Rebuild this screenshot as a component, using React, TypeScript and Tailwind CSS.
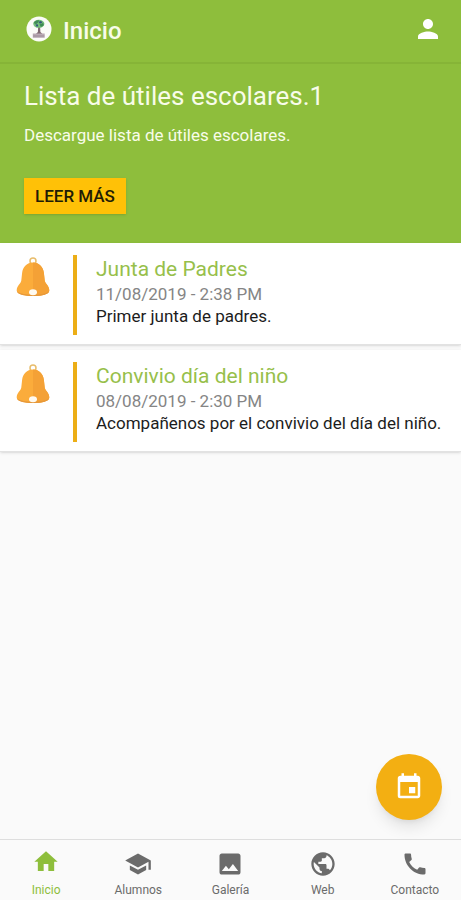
import React, { useState } from 'react';
import {
  MdCall,
  MdEvent,
  MdImage,
  MdPerson,
  MdPublic,
  MdSchool,
} from 'react-icons/md';

interface Notice {
  id: number;
  title: string;
  date: string;
  text: string;
}

const notices: Notice[] = [
  {
    id: 1,
    title: 'Junta de Padres',
    date: '11/08/2019 - 2:38 PM',
    text: 'Primer junta de padres.',
  },
  {
    id: 2,
    title: 'Convivio día del niño',
    date: '08/08/2019 - 2:30 PM',
    text: 'Acompañenos por el convivio del día del niño.',
  },
];

const HomeIcon: React.FC<{ className?: string }> = ({ className }) => (
  <svg viewBox="0 2 24 24" fill="currentColor" className={className} aria-hidden="true">
    <path d="M10 20v-6h4v6h5v-8h3L12 3 2 12h3v8z" />
  </svg>
);

const tabs = [
  { label: 'Inicio', icon: HomeIcon },
  { label: 'Alumnos', icon: MdSchool },
  { label: 'Galería', icon: MdImage },
  { label: 'Web', icon: MdPublic },
  { label: 'Contacto', icon: MdCall },
];

const SchoolLogo: React.FC = () => (
  <svg viewBox="0 0 26 26" className="w-[26px] h-[26px]" aria-hidden="true">
    <circle cx="13" cy="13" r="12.5" fill="#fbfcf8" />
    <path d="M12.2 9h1.8l.4 7 2.3 2.2H9.7l2.2-2.2z" fill="#806a72" />
    <ellipse cx="12.8" cy="7.8" rx="5.6" ry="4" fill="#75bf7a" />
    <path d="M7.8 7c1-2.400 3.300-3.200 5.400-2.700l-1 2.300-2.200 1.700zM13.500 8.500l3.600-1.600.8 2.300-3 1.700z" fill="#3f8b55" />
    <path d="M12.500 5.700l2.600-.8 1.300 1.700-2.500 1.100zM9.500 8.600l2.200-.4.6 2-1.700.5z" fill="#35557c" />
    <path d="M6.800 17.500h11.900v4.300H6.800z" fill="#b9a9b4" />
    <path d="M7.200 20h11.100" stroke="#9a8b97" strokeWidth="1" />
  </svg>
);

const Bell: React.FC = () => (
  <svg viewBox="0 0 34 40" className="mt-0.5 w-[34px] h-10" aria-hidden="true">
    <circle cx="17" cy="4" r="3" fill="none" stroke="#e8bd6c" strokeWidth="1.5" />
    <path
      d="M17 5.5c-6 0-10.200 4.200-10.900 10.500l-.8 7.500C5 26.600.7 28.500.7 33.500c0 3.600 7 5.500 16.300 5.500s16.300-1.900 16.300-5.500c0-5-4.300-6.900-4.600-10l-.8-7.500C27.200 9.700 23 5.500 17 5.500z"
      fill="#fbac3b"
    />
    <path
      d="M17 5.500c6 0 10.200 4.200 10.900 10.500l.8 7.500c.3 3.100 4.600 5 4.600 10 0 3.600-7 5.500-16.300 5.500z"
      fill="#f4a136"
    />
    <path d="M1 34.500c3.500 2.500 9 3.200 16 3.200s12.500-.7 16-3.200c-.9 3-7.500 4.500-16 4.500S1.900 37.500 1 34.500z" fill="#e6983a" />
    <ellipse cx="17" cy="35.300" rx="4" ry="3" fill="#fffaf0" />
  </svg>
);

const App: React.FC = () => {
  const [active, setActive] = useState('Inicio');

  return (
    <div className="relative min-h-screen flex flex-col bg-[#fafafa] font-[Roboto,sans-serif] text-black">
      <header className="flex items-center justify-between h-16 pl-[26px] pr-[18px] pb-1 bg-[#8ebe3c] border-b-2 border-[#86b437]">
        <div className="flex items-center gap-[11px]">
          <SchoolLogo />
          <h1 className="pt-1 text-2xl leading-7 font-medium text-[#f8fce9]">Inicio</h1>
        </div>
        <button type="button" aria-label="Perfil" className="text-white">
          <MdPerson className="w-[30px] h-[30px]" />
        </button>
      </header>

      {/* Banner */}
      <section className="h-[179px] px-6 pt-4 bg-[#8ebe3c] text-[#f8fce9]">
        <h2 className="text-[26px] leading-8">Lista de útiles escolares.1</h2>
        <p className="mt-[11px] text-[17px] leading-6">Descargue lista de útiles escolares.</p>
        <button
          type="button"
          className="mt-[31px] h-9 px-[11px] bg-[#ffc107] text-[17px] leading-6 font-medium text-[#221c05] shadow-sm"
        >
          LEER MÁS
        </button>
      </section>

      {/* Notices */}
      <main className="flex-1">
        <ul>
          {notices.map(notice => (
            <li
              key={notice.id}
              className="flex items-start mb-[5px] pl-4 pr-2 pt-3 pb-[9px] bg-white border-b border-[#e2e2e2] shadow-sm"
            >
              <Bell />
              <div className="ml-[23px] h-20 w-1 shrink-0 bg-[#ecae16]" />
              <div className="ml-[19px]">
                <h3 className="text-[21px] leading-7 text-[#97bf4b]">{notice.title}</h3>
                <p className="text-[17px] leading-[22px] text-[#858585]">{notice.date}</p>
                <p className="text-[17px] leading-[22px] text-[#1c1c1c]">{notice.text}</p>
              </div>
            </li>
          ))}
        </ul>
      </main>

      <button
        type="button"
        aria-label="Calendario"
        className="absolute right-[19px] bottom-20 flex items-center justify-center w-[66px] h-[66px] rounded-full bg-[#f3af12] text-white shadow-lg"
      >
        <MdEvent className="w-[30px] h-[30px]" />
      </button>

      <nav className="grid grid-cols-5 h-[61px] bg-[#fafafa] border-t border-[#dedede]">
        {tabs.map(tab => {
          const Icon = tab.icon;
          return (
            <button
              key={tab.label}
              type="button"
              onClick={() => setActive(tab.label)}
              className={`flex flex-col items-center pt-[10px] ${
                active === tab.label ? 'text-[#8ebe3c]' : 'text-[#6b6b6b]'
              }`}
            >
              <Icon className="w-7 h-7" />
              <span className="mt-1 text-xs leading-4">{tab.label}</span>
            </button>
          );
        })}
      </nav>
    </div>
  );
};

export default App;
